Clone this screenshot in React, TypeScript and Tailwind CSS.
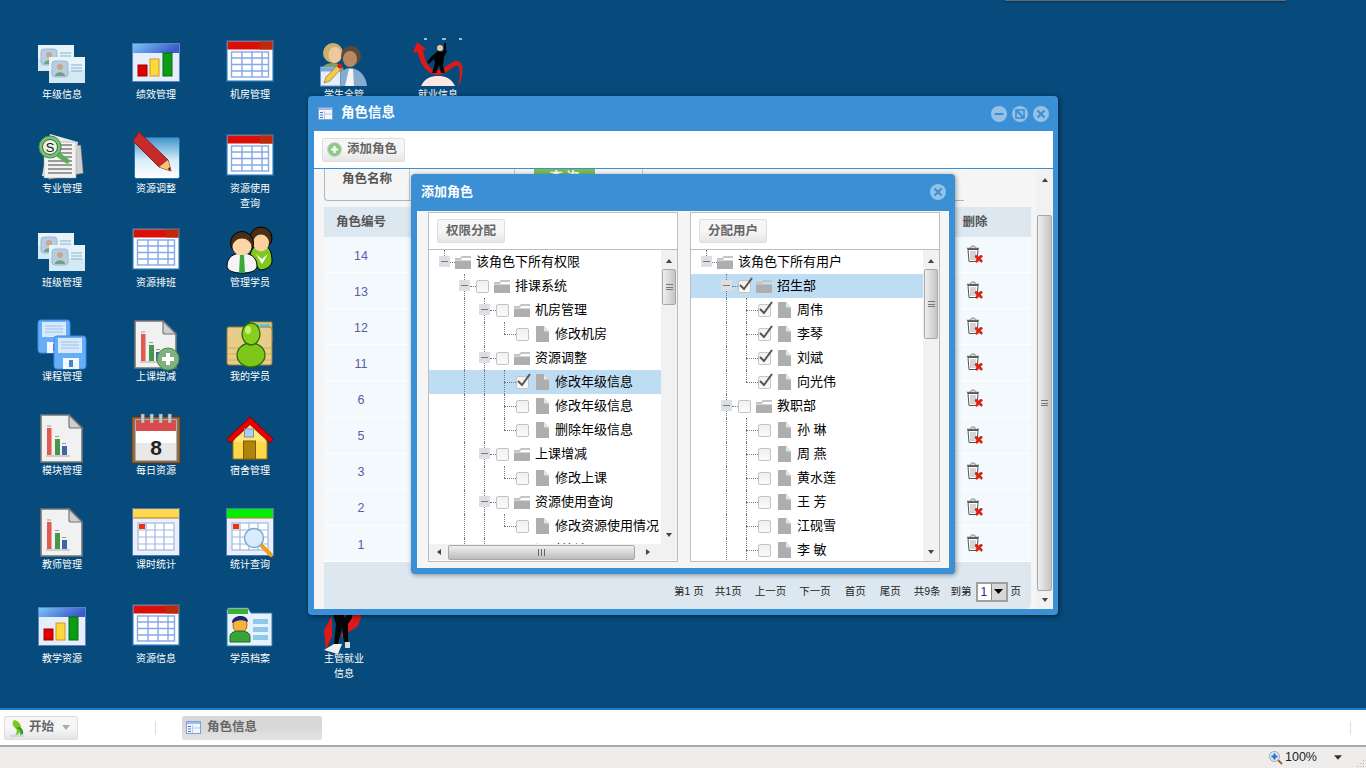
import type { ReactNode } from 'react';

type IconProps = { className?: string };

function Svg({ children }: { children: ReactNode }) {
  return (
    <svg width="48" height="48" viewBox="0 0 48 48" className="overflow-visible">
      {children}
    </svg>
  );
}

function TableIcon({ green }: { green?: boolean }) {
  return (
    <Svg>
      <rect x="0" y="0" width="48" height="42" fill="#1b6aa6" />
      <rect x="1.5" y="1.5" width="45" height="39" fill="#fff" />
      <rect x="1.5" y="1.5" width="45" height="8" fill={green ? '#00e000' : '#d81008'} />
      <rect x="34" y="1.5" width="12.5" height="8" fill="#bf2a0a" />
      <g stroke="#86a8e8" strokeWidth="1.4" fill="none">
        <rect x="5.5" y="12" width="37" height="25" />
        <path d="M16 12v25M26 12v25M36 12v25M5.5 18h37M5.5 24.500h37M5.5 31h37" />
      </g>
    </Svg>
  );
}

function ChartIcon() {
  return (
    <Svg>
      <defs>
        <linearGradient id="chartHead" x1="0" x2="1" y1="0" y2="0.300">
          <stop offset="0" stopColor="#7cc4fb" />
          <stop offset="1" stopColor="#3c5cc8" />
        </linearGradient>
      </defs>
      <rect x="0.500" y="3.500" width="47" height="38" fill="#e6eefc" stroke="#5b86c6" />
      <rect x="1" y="4" width="46" height="9" fill="url(#chartHead)" />
      <rect x="6" y="25" width="9" height="11" fill="#e00000" stroke="#a00000" />
      <rect x="18" y="19" width="9" height="17" fill="#ffd83c" stroke="#c89a20" />
      <rect x="31" y="13" width="9" height="23" fill="#0a9c14" stroke="#066c10" />
    </Svg>
  );
}

function Card({ x, y }: { x: number; y: number }) {
  return (
    <g transform={`translate(${x} ${y})`}>
      <rect x="0" y="0" width="36" height="26" fill="#d5e9f3" />
      <rect x="0" y="0" width="36" height="13" fill="#e6f3f8" />
      <rect x="3" y="4" width="16" height="16" rx="3" fill="#b7cde2" stroke="#9db8d4" />
      <circle cx="11" cy="10" r="3" fill="#c7a78a" />
      <path d="M6 19c0-5 10-5 10 0z" fill="#6fa283" />
      <path d="M22 8h11M22 11h11M22 14h11" stroke="#86b4d0" strokeWidth="1.200" />
    </g>
  );
}

function CardsIcon() {
  return (
    <Svg>
      <Card x={0} y={5} />
      <Card x={11} y={17} />
    </Svg>
  );
}

function NotesIcon() {
  return (
    <Svg>
      <path d="M6 18 42 10 46 38 12 46z" fill="#cfcfcf" stroke="#777" strokeWidth="0.500" transform="rotate(3 24 24)" />
      <path d="M12 0 40 8 34 44 4 42z" fill="#e8e8e8" />
      <rect x="6" y="8" width="32" height="36" fill="#f2f2f2" stroke="#999" strokeWidth="0.500" />
      <path d="M16 11h18M20 15h14M20 19h14M20 23h14M10 27h24M10 31h24M10 35h24M10 39h24" stroke="#444" strokeWidth="1" />
      <path d="M18 19 29 27" stroke="#5aae5a" strokeWidth="5" strokeLinecap="round" />
      <circle cx="12" cy="13" r="11" fill="#7dc27a" stroke="#3e8e41" />
      <circle cx="12" cy="13" r="7.500" fill="#e8f4e8" stroke="#2b6c2d" />
      <text x="12" y="18" fontSize="13" fontFamily="Liberation Sans" textAnchor="middle" fill="#111">S</text>
    </Svg>
  );
}

function PencilIcon() {
  return (
    <Svg>
      <defs>
        <linearGradient id="pencilWin" x1="0" x2="0" y1="0" y2="1">
          <stop offset="0" stopColor="#3f93cc" />
          <stop offset="0.550" stopColor="#d8ecf8" />
          <stop offset="1" stopColor="#fff" />
        </linearGradient>
      </defs>
      <rect x="2.500" y="3.500" width="45" height="41" rx="2" fill="url(#pencilWin)" stroke="#1f75b5" />
      <path d="M1 7 7 -2 36 26 39 37 27 33z" fill="#c62a2a" stroke="#8c1c1c" />
      <path d="M27 33 36 26 39 37z" fill="#f3c878" />
      <path d="M35.500 35 38 33 38.800 37z" fill="#8c1c1c" />
    </Svg>
  );
}

function PeopleIcon() {
  return (
    <Svg>
      <path d="M24 30c0-8 4-13 11-13s11 5 11 16c0 5-6 9-12 9z" fill="#7fc81e" stroke="#000" />
      <circle cx="35" cy="10" r="11" fill="#4a2f16" stroke="#000" />
      <ellipse cx="35" cy="15" rx="8" ry="8.500" fill="#fbd09c" />
      <path d="M30 26 36 31 42 26 36 36z" fill="#fff" />
      <path d="M1 38c0-9 7-13 15-13s15 4 15 13c0 5-7 7-15 7S1 43 1 38z" fill="#f4f4f4" stroke="#000" />
      <circle cx="16" cy="15" r="11.500" fill="#4a2f16" stroke="#000" />
      <ellipse cx="16" cy="19" rx="9.500" ry="8.500" fill="#fcd6a6" />
      <path d="M14 27h4l1 18h-6z" fill="#3aa83a" />
    </Svg>
  );
}

function Floppy({ x, y }: { x: number; y: number }) {
  return (
    <g transform={`translate(${x} ${y})`}>
      <rect x="0" y="0" width="32" height="33" rx="3" fill="#66aef6" stroke="#3d86e6" />
      <rect x="4" y="2" width="24" height="15" fill="#d8e9fc" />
      <path d="M7 6h18M7 9h18M7 12h18" stroke="#9cc3ef" />
      <rect x="9" y="22" width="16" height="11" fill="#f4f8fe" />
      <rect x="15" y="24" width="4" height="7" fill="#3f83d6" />
    </g>
  );
}

function FloppyIcon() {
  return (
    <Svg>
      <Floppy x={0} y={-2} />
      <Floppy x={16} y={14} />
    </Svg>
  );
}

function ReportIcon({ plus }: { plus?: boolean }) {
  return (
    <Svg>
      <path d="M3 -1H31L44 12V46H3z" fill="#f1f1f1" stroke="#777" strokeWidth="1.600" />
      <path d="M31 -1V10a2 2 0 0 0 2 2H44z" fill="#cfcfcf" stroke="#777" strokeWidth="1.200" />
      <rect x="9" y="12" width="4.500" height="27" fill="#e2594f" />
      <rect x="9" y="9.500" width="4" height="1" fill="#999" />
      <rect x="17" y="23" width="5" height="16" fill="#48964c" />
      <rect x="17" y="20" width="4" height="1" fill="#999" />
      <rect x="24" y="30" width="5" height="9" fill="#3f66a8" />
      <rect x="24" y="27" width="4" height="1" fill="#999" />
      <path d="M8 40H32" stroke="#aaa" />
      {plus && (
        <g>
          <circle cx="36" cy="37" r="11" fill="#7fb27f" stroke="#4d8c50" />
          <path d="M36 31V43M30 37H42" stroke="#fff" strokeWidth="4" />
        </g>
      )}
    </Svg>
  );
}

function FolderPersonIcon() {
  return (
    <Svg>
      <path d="M24 -0 46 0 46 20 24 20z" fill="#e9c976" stroke="#a5813c" />
      <rect x="28" y="2" width="5" height="3" fill="#2fd19a" />
      <rect x="34" y="2" width="10" height="3" fill="#58c7ee" />
      <path d="M1 7a2 2 0 0 1 2-2h40a3 3 0 0 1 3 3v33a2 2 0 0 1-2 2H3a2 2 0 0 1-2-2z" fill="#e8cd88" stroke="#9c7d3c" />
      <path d="M2 26h43M2 32h43M2 38h43" stroke="#c6a65c" strokeWidth="0.800" />
      <ellipse cx="25" cy="33" rx="14" ry="12" fill="#7fc61a" stroke="#2e6a06" strokeWidth="1.300" />
      <ellipse cx="25" cy="12" rx="9" ry="11" fill="#86cf1c" stroke="#2e6a06" strokeWidth="1.300" />
      <ellipse cx="22" cy="8" rx="3" ry="4" fill="#c5ee72" />
    </Svg>
  );
}

function CalendarIcon() {
  return (
    <Svg>
      <rect x="0" y="1" width="48" height="46" fill="#9c6a34" stroke="#5c3a16" />
      <rect x="3" y="3" width="42" height="42" fill="#e8e8e8" stroke="#777" />
      <rect x="4" y="4" width="40" height="11" fill="#dc4b4b" />
      <g fill="#c8c8c8" stroke="#777" strokeWidth="0.500">
        <rect x="9" y="-2" width="3.500" height="9" />
        <rect x="18" y="-2" width="3.500" height="9" />
        <rect x="27" y="-2" width="3.500" height="9" />
        <rect x="36" y="-2" width="3.500" height="9" />
      </g>
      <rect x="4" y="15" width="40" height="12" fill="#fff" />
      <text x="24" y="39" fontSize="21" fontWeight="700" fontFamily="Liberation Sans" textAnchor="middle" fill="#222">8</text>
    </Svg>
  );
}

function HouseIcon() {
  return (
    <Svg>
      <path d="M7 20H41V43H7z" fill="#ffd84a" stroke="#9c7310" />
      <path d="M24 1 1 23 4 27 24 9 44 27 47 23z" fill="#e80000" stroke="#860000" strokeLinejoin="round" />
      <path d="M24 9 9 23V26H39V23z" fill="#ffe476" />
      <rect x="18.500" y="13" width="9" height="8" fill="#a9d0f5" stroke="#7a8fa8" />
      <rect x="17.500" y="25" width="12" height="18" fill="#b08408" stroke="#7a5c08" />
    </Svg>
  );
}

function CalIcon({ search }: { search?: boolean }) {
  return (
    <Svg>
      <rect x="0.500" y="-1.500" width="47" height="47" fill="#e9effb" stroke="#4f78b8" />
      <rect x="1" y="-1" width="46" height="9" fill={search ? '#00ee00' : '#ffd852'} />
      <path d="M1 8H47" stroke="#b57a12" />
      <g stroke="#9fbadf" strokeWidth="1.200" fill="#fff">
        <rect x="6" y="13" width="36" height="27" />
        <path d="M14 13V40M23 13V40M32 13V40M6 20H42M6 27H42M6 34H42" fill="none" />
      </g>
      <rect x="7" y="14" width="6" height="5" fill="#f03010" />
      {search && (
        <g>
          <path d="M34 34 45 45" stroke="#f0a020" strokeWidth="4" strokeLinecap="round" />
          <circle cx="28" cy="28" r="9.500" fill="#d8ecfb" stroke="#7ca5cf" strokeWidth="1.400" />
        </g>
      )}
    </Svg>
  );
}

function ProfileIcon() {
  return (
    <Svg>
      <path d="M1 6a2 2 0 0 1 2-2h19l3 5h21v33H1z" fill="#e8f2fb" stroke="#2a79b5" />
      <rect x="2" y="5" width="20" height="5" fill="#3cb22a" />
      <ellipse cx="14" cy="21" rx="7" ry="8" fill="#f8b040" stroke="#a86a10" />
      <path d="M6 19c0-9 16-9 16-1-6-3-11-2-16 1z" fill="#18286e" />
      <path d="M4 38V33c0-5 5-6 10-6s10 1 10 6v5z" fill="#3aa33a" stroke="#1c6a1c" />
      <rect x="27" y="15" width="15" height="5" fill="#8ec8ea" />
      <rect x="27" y="23" width="15" height="5" fill="#8ec8ea" />
      <rect x="27" y="31" width="15" height="5" fill="#8ec8ea" />
    </Svg>
  );
}

function ManagerIcon() {
  return (
    <Svg>
      <path d="M0 36c0-10 6-13 13-13s12 4 12 14v5H4z" fill="#7fa05a" />
      <circle cx="13" cy="13" r="10" fill="#cbb06e" />
      <ellipse cx="15" cy="15" rx="6.500" ry="8" fill="#f0c8a0" />
      <path d="M18 46c-1-12 5-18 12-18s16 6 17 18z" fill="#86acd0" />
      <path d="M25 46 29 29h4l1 17z" fill="#f4f4f4" />
      <circle cx="31" cy="16" r="10" fill="#5b4a3a" />
      <ellipse cx="30" cy="19" rx="7" ry="8" fill="#b98a62" />
      <rect x="0.500" y="27" width="20" height="19" fill="#e4eefa" stroke="#6a94c8" />
      <rect x="1" y="27.500" width="19" height="4" fill="#7ba8de" />
      <path d="M4 43 6 37 17 26 21 29 10 41z" fill="#f6c94a" stroke="#8a6a18" strokeWidth="0.600" />
      <circle cx="20" cy="26" r="2.500" fill="#d02020" />
    </Svg>
  );
}

function RunnerIcon() {
  return (
    <Svg>
      <path d="M3 2-1 13 3.500 12C7 27 15 35 24 35 34 35 38 24 44 26 47 28 46 38 44 46 49 40 50 26 46 22 40 18 34 27 25 30 17 32 11 24 9 10L12 9z" fill="#e01818" />
      <path d="M7 46C11 38 17 36 24 36S37 38 41 46z" fill="#fbe8e4" />
      <path d="M18 16 24 11 28 12 31 9 33 11 30 17 29 26 31 33H27L25 25 22 33H18L21 23 20 19 15 24 13 22z" fill="#000" />
      <circle cx="26" cy="8" r="3" fill="#f2c49a" />
      <rect x="30" y="3" width="2" height="6" fill="#000" />
      <path d="M10 -1h3M28 -1h4M45 -1h3" stroke="#ddd" strokeWidth="1.600" />
    </Svg>
  );
}

function RunnerBottomIcon() {
  return (
    <Svg>
      <path d="M30 14 44 4 38 22 20 34z" fill="#e01818" />
      <path d="M4 26 12 12 12 32 6 46z" fill="#e01818" />
      <path d="M4 46 14 40H22L18 50z" fill="#f0f0f0" />
      <path d="M12 8 32 6 32 14 28 20 28 38 24 38 22 24 18 40H14L16 20z" fill="#050505" />
      <path d="M22 6 25 14 28 6z" fill="#c02020" />
      <rect x="25" y="38" width="5" height="6" fill="#ddd" />
    </Svg>
  );
}

type DeskItem = { label: string; icon: ReactNode } | null;

const desk: DeskItem[] = [
  { label: '年级信息', icon: <CardsIcon /> },
  { label: '绩效管理', icon: <ChartIcon /> },
  { label: '机房管理', icon: <TableIcon /> },
  { label: '学生全管', icon: <ManagerIcon /> },
  { label: '就业信息', icon: <RunnerIcon /> },
  { label: '专业管理', icon: <NotesIcon /> },
  { label: '资源调整', icon: <PencilIcon /> },
  { label: '资源使用查询', icon: <TableIcon /> },
  null,
  null,
  { label: '班级管理', icon: <CardsIcon /> },
  { label: '资源排班', icon: <TableIcon /> },
  { label: '管理学员', icon: <PeopleIcon /> },
  null,
  null,
  { label: '课程管理', icon: <FloppyIcon /> },
  { label: '上课增减', icon: <ReportIcon plus /> },
  { label: '我的学员', icon: <FolderPersonIcon /> },
  null,
  null,
  { label: '模块管理', icon: <ReportIcon /> },
  { label: '每日资源', icon: <CalendarIcon /> },
  { label: '宿舍管理', icon: <HouseIcon /> },
  null,
  null,
  { label: '教师管理', icon: <ReportIcon /> },
  { label: '课时统计', icon: <CalIcon /> },
  { label: '统计查询', icon: <CalIcon search /> },
  null,
  null,
  { label: '教学资源', icon: <ChartIcon /> },
  { label: '资源信息', icon: <TableIcon /> },
  { label: '学员档案', icon: <ProfileIcon /> },
  { label: '主管就业信息', icon: <RunnerBottomIcon /> },
  null,
];

function WindowGlyph({ className }: IconProps) {
  return (
    <svg width="15" height="13" viewBox="0 0 15 13" className={className}>
      <rect x="0.500" y="0.500" width="14" height="12" fill="#f2f6fc" stroke="#7ea2d8" />
      <rect x="1" y="1" width="13" height="2" fill="#9fbde8" />
      <path d="M2 5.500h3M2 8h3M2 10.500h3" stroke="#3f78d0" />
      <path d="M6.500 4v8M7 7h7" stroke="#b8c8e0" />
    </svg>
  );
}

function RoundBtn({ kind }: { kind: 'min' | 'max' | 'close' }) {
  return (
    <span className="w-4 h-4 rounded-full bg-white/45 flex items-center justify-center">
      <svg width="12" height="12" viewBox="0 0 12 12" fill="none" stroke="#3b8fd4" strokeWidth="2">
        {kind === 'min' && <path d="M1.500 6h9" />}
        {kind === 'max' && (
          <g>
            <rect x="2" y="2" width="8" height="8" strokeWidth="1.600" />
            <path d="M2 2l8 8" strokeWidth="2.200" />
          </g>
        )}
        {kind === 'close' && <path d="M2.500 2.500l7 7M9.500 2.500l-7 7" />}
      </svg>
    </span>
  );
}

function ToolButton({ children, className }: { children: ReactNode; className?: string }) {
  return (
    <span
      className={`inline-flex items-center border border-[#dedede] rounded-[2px] bg-gradient-to-b from-[#f6f6f6] from-50% to-[#e6e6e6] text-[#666] font-bold ${className ?? ''}`}
    >
      {children}
    </span>
  );
}

function Arrow({ dir, size = 'sm' }: { dir: 'up' | 'down' | 'left' | 'right'; size?: 'sm' | 'md' }) {
  const s = size === 'md' ? 8 : 6;
  const d = {
    up: 'M0 6h6L3 2z',
    down: 'M0 1h6L3 5z',
    left: 'M5 0v6L1 3z',
    right: 'M1 0v6l4-3z',
  }[dir];
  return (
    <svg width={s} height={s} viewBox="0 0 6 6" className="fill-[#444]">
      <path d={d} />
    </svg>
  );
}

function VScroll({ thumb, top, className }: { thumb: string; top: string; className?: string }) {
  return (
    <div className={`flex flex-col items-stretch bg-[#f1f1f1] ${className ?? ''}`}>
      <div className="h-[19px] shrink-0 flex items-center justify-center">
        <Arrow dir="up" />
      </div>
      <div className="flex-1 min-h-0">
        <div
          className={`${top} ${thumb} border border-[#a8a8a8] rounded-[2px] bg-gradient-to-r from-[#efefef] to-[#c4c4c4] flex items-center justify-center`}
        >
          <div className="w-[7px] h-[6px] border-y border-[#777] flex items-center">
            <div className="w-full h-px bg-[#777]" />
          </div>
        </div>
      </div>
      <div className="h-[19px] shrink-0 flex items-center justify-center">
        <Arrow dir="down" />
      </div>
    </div>
  );
}

type Node = {
  level: number;
  label: string;
  folder?: boolean;
  checked?: boolean;
  selected?: boolean;
  last?: boolean;
};

const perms: Node[] = [
  { level: 0, label: '该角色下所有权限', folder: true },
  { level: 1, label: '排课系统', folder: true },
  { level: 2, label: '机房管理', folder: true },
  { level: 3, label: '修改机房', last: true },
  { level: 2, label: '资源调整', folder: true },
  { level: 3, label: '修改年级信息', checked: true, selected: true },
  { level: 3, label: '修改年级信息' },
  { level: 3, label: '删除年级信息', last: true },
  { level: 2, label: '上课增减', folder: true },
  { level: 3, label: '修改上课', last: true },
  { level: 2, label: '资源使用查询', folder: true },
  { level: 3, label: '修改资源使用情况', last: true },
  { level: 2, label: '课时统计', folder: true },
];

const users: Node[] = [
  { level: 0, label: '该角色下所有用户', folder: true },
  { level: 1, label: '招生部', folder: true, checked: true, selected: true },
  { level: 2, label: '周伟', checked: true },
  { level: 2, label: '李琴', checked: true },
  { level: 2, label: '刘斌', checked: true },
  { level: 2, label: '向光伟', checked: true, last: true },
  { level: 1, label: '教职部', folder: true },
  { level: 2, label: '孙 琳' },
  { level: 2, label: '周 燕' },
  { level: 2, label: '黄水莲' },
  { level: 2, label: '王 芳' },
  { level: 2, label: '江砚雪' },
  { level: 2, label: '李 敏' },
];

function Checkbox({ checked }: { checked?: boolean }) {
  return (
    <span className="relative w-[13px] h-[13px] shrink-0 rounded-[2px] border border-[#c4c4c4] bg-gradient-to-b from-[#f0f0f0] to-[#fafafa]">
      {checked && (
        <svg width="17" height="16" viewBox="0 0 17 16" className="absolute -top-[5px] -left-[1px]">
          <path d="M2 9l4 4L14 2" fill="none" stroke="#555" strokeWidth="2" />
        </svg>
      )}
    </span>
  );
}

function FolderGlyph() {
  return (
    <svg width="16" height="13" viewBox="0 0 16 13" className="shrink-0">
      <path d="M0 2h5l2-2h9v2H7L6 4H0z" fill="#c4c4c4" />
      <path d="M0 4.500h16V13H0z" fill="#aeaeae" />
    </svg>
  );
}

function DocGlyph() {
  return (
    <svg width="13" height="16" viewBox="0 0 13 16" className="shrink-0">
      <path d="M0 0h8l5 5.500V16H0z" fill="#aeaeae" />
      <path d="M8 0v5.500h5z" fill="#e4e4e4" />
    </svg>
  );
}

function TreeRow({ node }: { node: Node }) {
  const { level, label, folder, checked, selected, last } = node;
  return (
    <div className={`flex items-center h-6 pl-[10px] shrink-0 whitespace-nowrap ${selected ? 'bg-[#bedcf2]' : ''}`}>
      {Array.from({ length: level }).map((_, i) => (
        <span key={i} className="w-5 h-full shrink-0">
          {i > 0 && <span className="block ml-[5px] h-full border-l border-dotted border-[#777]" />}
        </span>
      ))}
      <span className={`relative h-full shrink-0 ${level === 0 ? 'w-4' : 'w-[17px]'}`}>
        {folder ? (
          <>
            <span
              className={`absolute left-[5px] top-0 border-l border-dotted border-[#777] ${level === 0 ? 'h-1/2' : 'h-full'}`}
            />
            <span className="absolute left-[11px] right-0 top-1/2 border-t border-dotted border-[#777]" />
            <span className="absolute left-0 top-[6px] w-[11px] h-[11px] bg-[#dcdfe4] flex items-center justify-center">
              <span className="w-[7px] h-px bg-[#777]" />
            </span>
          </>
        ) : (
          <>
            <span
              className={`absolute left-[5px] top-0 border-l border-dotted border-[#777] ${last ? 'h-1/2' : 'h-full'}`}
            />
            <span className="absolute left-[5px] right-0 top-1/2 border-t border-dotted border-[#777]" />
          </>
        )}
      </span>
      {level > 0 && (
        <span className={`flex items-center ${folder ? 'mr-[5px]' : 'mr-[7px]'}`}>
          <Checkbox checked={checked} />
        </span>
      )}
      {folder ? <FolderGlyph /> : <DocGlyph />}
      <span className={`text-[13px] text-black ${folder ? 'ml-[5px]' : 'ml-[6px]'}`}>{label}</span>
    </div>
  );
}

function TreePanel({ title, nodes, withHBar }: { title: string; nodes: Node[]; withHBar?: boolean }) {
  return (
    <div className="w-[250px] h-full border border-[#bdbdbd] bg-white flex flex-col">
      <div className="h-[37px] shrink-0 border-b border-[#bdbdbd] flex items-center pl-2">
        <ToolButton className="h-6 px-2 text-[12.5px]">{title}</ToolButton>
      </div>
      <div className="flex-1 min-h-0 flex flex-col">
        <div className="flex-1 min-h-0 flex">
          <div className="flex-1 min-w-0 overflow-hidden flex flex-col">
            {nodes.map((n, i) => (
              <TreeRow key={i} node={n} />
            ))}
          </div>
          <VScroll
            thumb={withHBar ? 'h-[36px]' : 'h-[70px]'}
            top=""
            className="w-4 shrink-0 px-px"
          />
        </div>
        {withHBar && (
          <div className="h-[16px] shrink-0 mb-px bg-[#f1f1f1] flex items-center">
            <span className="w-[19px] shrink-0 flex justify-center">
              <Arrow dir="left" />
            </span>
            <div className="w-[187px] h-[15px] border border-[#a8a8a8] rounded-[2px] bg-gradient-to-b from-[#efefef] to-[#bdbdbd] flex items-center justify-center">
              <div className="w-[7px] h-[7px] border-x border-[#666] flex justify-center">
                <div className="w-px h-full bg-[#666]" />
              </div>
            </div>
            <span className="w-[26px] shrink-0 flex justify-center">
              <Arrow dir="right" />
            </span>
          </div>
        )}
      </div>
    </div>
  );
}

function TrashIcon() {
  return (
    <svg width="18" height="19" viewBox="0 0 18 19">
      <path d="M1 3.500h12" stroke="#666" strokeWidth="1.500" />
      <path d="M4.500 2.500c0-2 5-2 5 0" fill="none" stroke="#777" />
      <path d="M2 4.500h10l-1 12H3z" fill="#fff" stroke="#555" />
      <path d="M5 6v9M7 6v9M9 6v9" stroke="#aaa" />
      <path d="M9.500 10.500h1.500l1.500 1.500 1.500-1.500h2l.5 1-2 2 2 2.500-1 1.500-2.500-2-2 2-1.500-1 1.500-2.500-2-2z" fill="#e8200c" stroke="#a51400" strokeWidth="0.500" />
    </svg>
  );
}

const roleIds = ['14', '13', '12', '11', '6', '5', '3', '2', '1'];

function RoleWindow() {
  return (
    <div className="absolute left-[308px] top-[96px] w-[750px] h-[519px] rounded-[4px] bg-[#3b8fd4] shadow-[1px_1px_5px_rgba(0,0,0,0.55)] flex flex-col pl-[6px] pr-[5px] pb-[6px]">
      <div className="h-[35px] shrink-0 flex items-center">
        <WindowGlyph className="ml-1" />
        <span className="ml-2 text-[13.500px] font-bold text-white">角色信息</span>
        <span className="ml-auto mr-[4px] flex gap-[5px]">
          <RoundBtn kind="min" />
          <RoundBtn kind="max" />
          <RoundBtn kind="close" />
        </span>
      </div>
      <div className="h-[38px] shrink-0 bg-white border-b border-[#3b8fd4] flex items-center pl-2">
        <ToolButton className="h-[24px] pl-1 pr-[7px] text-[12.500px] gap-[5px]">
          <svg width="15" height="15" viewBox="0 0 15 15">
            <circle cx="7.500" cy="7.500" r="7" fill="#8ec98a" stroke="#c4d8c0" />
            <path d="M7.500 4v7M4 7.500h7" stroke="#fff" strokeWidth="2.200" />
          </svg>
          添加角色
        </ToolButton>
      </div>
      <div className="flex-1 min-h-0 bg-[#f5f5f5] flex">
        <div className="flex-1 min-w-0 flex flex-col pl-[10px] pr-[5px]">
          <div className="h-[32px] w-[640px] shrink-0 border-l border-b border-[#a8b8c8] rounded-bl-[4px] flex">
            <span className="w-[84px] text-center text-[12.500px] font-bold text-[#555] pt-[1px]">角色名称</span>
            <span className="w-[105px] border-l border-[#c8c8c8]" />
            <span className="w-[20px] border-l border-[#c8c8c8]" />
            <span className="w-[61px] h-[10px] bg-[#7cbe50] text-center text-[13px] leading-[16px] font-bold text-white overflow-hidden">
              查 询
            </span>
            <span className="w-[47px]" />
            <span className="w-px h-full bg-[#c8c8c8]" />
          </div>
          <div className="mt-[6px] h-[30px] shrink-0 bg-[#dde7f0] flex items-center text-[12.500px] font-bold text-[#555]">
            <span className="w-[74px] text-center">角色编号</span>
            <span className="ml-auto w-[112px] text-center">删除</span>
          </div>
          <div className="h-[325px] shrink-0 flex flex-col">
            {roleIds.map(id => (
              <div key={id} className="flex-1 flex items-center bg-[#f3f9fd] border-b border-white">
                <span className="w-[74px] text-center text-[12.500px] text-[#5560a5] pt-[3px]">{id}</span>
                <span className="ml-auto w-[112px] flex justify-center">
                  <TrashIcon />
                </span>
              </div>
            ))}
          </div>
          <div className="flex-1 min-h-0 bg-[#dde7f0] rounded-br-[6px] flex items-center justify-end pr-[10px] pt-[12px] text-[10.500px] text-[#222]">
            <span>第1 页</span>
            <span className="ml-[11px]">共1页</span>
            <span className="ml-[13px]">上一页</span>
            <span className="ml-[13px]">下一页</span>
            <span className="ml-[14px]">首页</span>
            <span className="ml-[14px]">尾页</span>
            <span className="ml-[13px]">共9条</span>
            <span className="ml-[10px]">到第</span>
            <span className="ml-[4px] w-[32px] h-[20px] border-2 border-[#a0a0a0] bg-white flex items-center justify-between">
              <span className="pl-[3px] text-[12px] text-[#3a2080]">1</span>
              <span className="w-[15px] h-full bg-[#d8d8d8] border-l border-[#888] flex items-center justify-center">
                <svg width="9" height="5" viewBox="0 0 9 5">
                  <path d="M0 0h9L4.500 5z" fill="#000" />
                </svg>
              </span>
            </span>
            <span className="ml-[3px]">页</span>
          </div>
        </div>
        <VScroll thumb="h-[376px]" top="mt-[27px]" className="w-[17px] shrink-0 px-px" />
      </div>
    </div>
  );
}

function AddRoleDialog() {
  return (
    <div className="absolute left-[411px] top-[174px] w-[544px] h-[400px] rounded-[4px] bg-[#3b8fd4] shadow-[1px_1px_5px_rgba(0,0,0,0.4)] flex flex-col px-[6px] pb-[6px]">
      <div className="h-[37px] shrink-0 flex items-center pb-[2px]">
        <span className="ml-1 text-[13px] font-bold text-white">添加角色</span>
        <span className="ml-auto mr-[3px]">
          <RoundBtn kind="close" />
        </span>
      </div>
      <div className="flex-1 min-h-0 bg-[#f5f5f5] flex gap-3 pl-[11px] pt-px pb-[6px]">
        <TreePanel title="权限分配" nodes={perms} withHBar />
        <TreePanel title="分配用户" nodes={users} />
      </div>
    </div>
  );
}

export default function App() {
  return (
    <div className="relative w-[1366px] h-[768px] overflow-hidden flex flex-col bg-white font-['Liberation_Sans','Noto_Sans_CJK_SC',sans-serif]">
      <div className="relative h-[708px] shrink-0 bg-[#064b7c]">
        <div className="absolute left-[1005px] top-0 w-[281px] h-px bg-[#5a6a78] shadow-[0_1px_2px_rgba(0,0,0,0.5)]" />
        <div className="grid grid-cols-[repeat(5,94px)] grid-rows-[repeat(7,94px)] pl-[15px] pt-[40px]">
          {desk.map((item, i) =>
            item ? (
              <div key={i} className="flex flex-col items-center">
                <div className="h-[48px] w-12 shrink-0">{item.icon}</div>
                <div className="w-[46px] text-center text-[10px] leading-[14.500px] text-white">{item.label}</div>
              </div>
            ) : (
              <div key={i} />
            ),
          )}
        </div>
        <RoleWindow />
        <AddRoleDialog />
      </div>
      <div className="h-[37px] shrink-0 border-t-2 border-[#1a7fc8] bg-white flex items-center pl-1 pr-[15px]">
        <ToolButton className="w-[74px] h-[24px] pl-1 text-[12.500px]">
          <svg width="18" height="18" viewBox="0 0 18 18">
            <path d="M5 1c5 1 8 5 7 10-1 3-3 5-6 5 3-3 2-6-1-8C3 6 3 3 5 1z" fill="#7cc81e" />
            <path d="M7 9c4 1 5 4 4 7l3-1c1-3-1-6-4-7z" fill="#2e9c34" />
            <path d="M1 17h14" stroke="#a8c8e8" />
          </svg>
          <span className="ml-[2px]">开始</span>
          <svg width="8" height="5" viewBox="0 0 8 5" className="ml-2">
            <path d="M0 0h8L4 5z" fill="#aaa" />
          </svg>
        </ToolButton>
        <span className="ml-[77px] w-px h-[14px] bg-[#ddd]" />
        <span className="ml-[26px] w-[140px] h-[24px] rounded-[2px] flex items-center pl-1 bg-gradient-to-b from-[#d8d8d8] from-50% to-[#e4e4e4] text-[12.500px] font-bold text-[#666]">
          <WindowGlyph />
          <span className="ml-[6px]">角色信息</span>
        </span>
        <span className="ml-auto w-px h-[14px] bg-[#ddd]" />
      </div>
      <div className="h-[23px] shrink-0 border-t-2 border-[#a8a8a8] mb-[1px] bg-[#efecec] flex items-center justify-end">
        <svg width="14" height="14" viewBox="0 0 14 14">
          <path d="M9 9l4 4" stroke="#a0622a" strokeWidth="2" />
          <circle cx="5.500" cy="5.500" r="5" fill="#dfe8f4" stroke="#9aa8ba" />
          <path d="M5.500 2.500v6M2.500 5.500h6" stroke="#1f6fd0" strokeWidth="2" />
        </svg>
        <span className="ml-[2px] text-[12.500px] text-[#222]">100%</span>
        <svg width="8" height="5" viewBox="0 0 9 5" className="ml-[17px]">
          <path d="M0 0h9L4.500 5z" fill="#333" />
        </svg>
        <svg width="8" height="8" viewBox="0 0 8 8" className="ml-[15px] mr-[1px] self-end mb-[1px]">
          <path d="M6.500 1v1M4 4v1M6.500 4v1M1 7v1M4 7v1M6.500 7v1" stroke="#aaa" />
        </svg>
      </div>
    </div>
  );
}
